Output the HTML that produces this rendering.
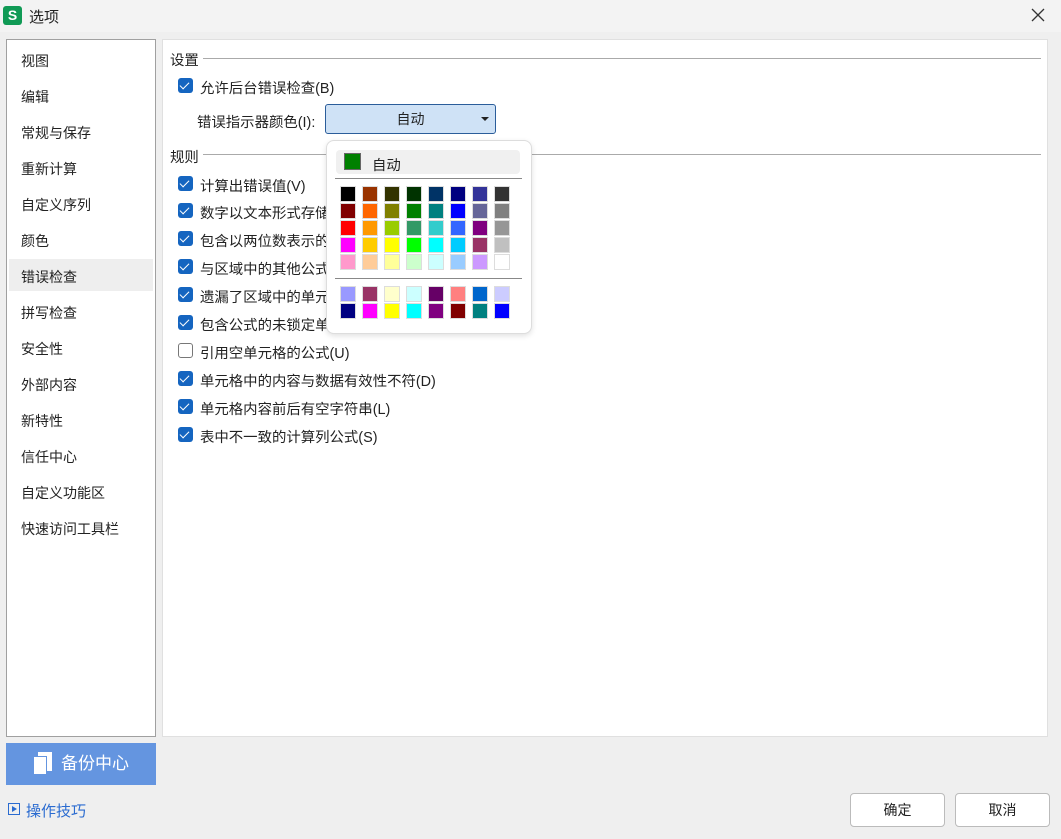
<!DOCTYPE html><html><head><meta charset="utf-8"><style>
*{box-sizing:border-box;margin:0;padding:0}
body{width:1061px;height:839px;background:#efefef;font-family:"Liberation Sans","Noto Sans CJK SC",sans-serif;font-size:14px;color:#222;position:relative;overflow:hidden}
.abs{position:absolute}
.side{left:6px;top:39px;width:150px;height:698px;background:#fff;border:1px solid #a0a0a0}
.side div{position:absolute;left:14px;font-size:14px}
.sel{left:2px!important;width:144px;height:32px;background:#eeeeee}
.main{left:162px;top:39px;width:886px;height:698px;background:#fff;border:1px solid #e0e0e0}
.cb{position:absolute;width:15px;height:15px;border-radius:3px;background:#1565c0}
.cb:after{content:"";position:absolute;left:4px;top:2px;width:4px;height:8px;border:solid #fff;border-width:0 1.5px 1.5px 0;transform:rotate(45deg)}
.cb.off{background:#fff;border:1px solid #777}.cb.off:after{display:none}
.lbl{position:absolute;font-size:14.4px}
.sw{position:absolute;width:16px;height:16px;border:1px solid #ddd}
.btn{position:absolute;top:793px;width:95px;height:34px;border:1px solid #bbb;background:#fff;border-radius:4px;text-align:center;line-height:32px}
</style></head><body>
<div class="abs" style="left:0;top:0;width:1061px;height:32px;background:#f3f3f3"></div>
<div class="abs" style="left:3px;top:6px;width:19px;height:19px;background:#109a55;border-radius:3px;color:#fff;font-weight:bold;text-align:center;line-height:19px;font-size:14px">S</div>
<div class="abs" style="left:29px;top:6px;font-size:15px">选项</div>
<svg class="abs" style="left:1031px;top:8px" width="14" height="14"><path d="M1 1L13 13M13 1L1 13" stroke="#333" stroke-width="1.3"/></svg>
<div class="abs side">
<div class="sel" style="top:219px"></div>
<div style="top:11px">视图</div><div style="top:47px">编辑</div><div style="top:83px">常规与保存</div><div style="top:119px">重新计算</div><div style="top:155px">自定义序列</div><div style="top:191px">颜色</div><div style="top:227px">错误检查</div><div style="top:263px">拼写检查</div><div style="top:299px">安全性</div><div style="top:335px">外部内容</div><div style="top:371px">新特性</div><div style="top:407px">信任中心</div><div style="top:443px">自定义功能区</div><div style="top:479px">快速访问工具栏</div>
</div>
<div class="abs" style="left:6px;top:743px;width:150px;height:42px;background:#6495e0;color:#fff;font-size:17px;line-height:42px;padding-left:55px">备份中心</div>
<div class="abs" style="left:38px;top:752px;width:14px;height:19px;background:#fff"></div>
<div class="abs" style="left:33px;top:756px;width:14px;height:19px;background:#fff;border:1px solid #6495e0"></div>
<div class="abs" style="left:8px;top:803px;width:12px;height:12px;border:1px solid #2a6bd0"></div>
<div class="abs" style="left:12px;top:806px;border:3px solid transparent;border-left:5px solid #2a6bd0"></div>
<div class="abs" style="left:26px;top:800px;color:#2a6bd0;font-size:15px">操作技巧</div>
<div class="abs main"></div>
<div class="lbl" style="left:170px;top:49px">设置</div>
<div class="abs" style="left:203px;top:58px;width:838px;height:1px;background:#aaa"></div>
<div class="cb" style="left:178px;top:78px"></div><div class="lbl" style="left:200px;top:77px">允许后台错误检查(B)</div>
<div class="lbl" style="left:197px;top:111px">错误指示器颜色(I):</div>
<div class="abs" style="left:325px;top:104px;width:171px;height:30px;background:#cfe2f6;border:1px solid #2b5d9a;border-radius:3px;text-align:center;line-height:28px">自动</div>
<div class="abs" style="left:481px;top:117px;border:4px solid transparent;border-top:4px solid #222"></div>
<div class="lbl" style="left:170px;top:146px">规则</div>
<div class="abs" style="left:203px;top:154px;width:838px;height:1px;background:#aaa"></div>
<div class="cb" style="left:178px;top:176px"></div><div class="lbl" style="left:200px;top:175px">计算出错误值(V)</div>
<div class="cb" style="left:178px;top:203px"></div><div class="lbl" style="left:200px;top:202px">数字以文本形式存储</div>
<div class="cb" style="left:178px;top:231px"></div><div class="lbl" style="left:200px;top:230px">包含以两位数表示的年份</div>
<div class="cb" style="left:178px;top:259px"></div><div class="lbl" style="left:200px;top:258px">与区域中的其他公式不一致</div>
<div class="cb" style="left:178px;top:287px"></div><div class="lbl" style="left:200px;top:286px">遗漏了区域中的单元格</div>
<div class="cb" style="left:178px;top:315px"></div><div class="lbl" style="left:200px;top:314px">包含公式的未锁定单元格</div>
<div class="cb off" style="left:178px;top:343px"></div><div class="lbl" style="left:200px;top:342px">引用空单元格的公式(U)</div>
<div class="cb" style="left:178px;top:371px"></div><div class="lbl" style="left:200px;top:370px">单元格中的内容与数据有效性不符(D)</div>
<div class="cb" style="left:178px;top:399px"></div><div class="lbl" style="left:200px;top:398px">单元格内容前后有空字符串(L)</div>
<div class="cb" style="left:178px;top:427px"></div><div class="lbl" style="left:200px;top:426px">表中不一致的计算列公式(S)</div>
<div class="abs" style="left:326px;top:140px;width:206px;height:194px;background:#fff;border:1px solid #ddd;border-radius:8px;box-shadow:0 2px 6px rgba(0,0,0,.12)"></div>
<div class="abs" style="left:336px;top:150px;width:184px;height:24px;background:#f0f0f0;border-radius:4px"></div>
<div class="abs" style="left:344px;top:153px;width:17px;height:17px;background:#008000;border:1px solid #666"></div>
<div class="lbl" style="left:372px;top:154px">自动</div>
<div class="abs" style="left:335px;top:178px;width:187px;height:1px;background:#888"></div>
<div class="abs" style="left:335px;top:278px;width:187px;height:1px;background:#888"></div>
<div id="g"></div>
<div class="btn" style="left:850px">确定</div>
<div class="btn" style="left:955px">取消</div>
<script>
var c=[["#000000","#993300","#333300","#003300","#003366","#000080","#333399","#333333"],["#800000","#ff6600","#808000","#008000","#008080","#0000ff","#666699","#808080"],["#ff0000","#ff9900","#99cc00","#339966","#33cccc","#3366ff","#800080","#969696"],["#ff00ff","#ffcc00","#ffff00","#00ff00","#00ffff","#00ccff","#993366","#c0c0c0"],["#ff99cc","#ffcc99","#ffff99","#ccffcc","#ccffff","#99ccff","#cc99ff","#ffffff"]],d=[["#9999ff","#993366","#ffffcc","#ccffff","#660066","#ff8080","#0066cc","#ccccff"],["#000080","#ff00ff","#ffff00","#00ffff","#800080","#800000","#008080","#0000ff"]],h="";
function f(a,y0){a.forEach(function(r,i){r.forEach(function(x,j){h+='<div class="sw" style="left:'+(340+j*22)+'px;top:'+(y0+i*17)+'px;background:'+x+'"></div>'})})}
f(c,186);f(d,286);document.getElementById("g").innerHTML=h;
</script>
</body></html>
